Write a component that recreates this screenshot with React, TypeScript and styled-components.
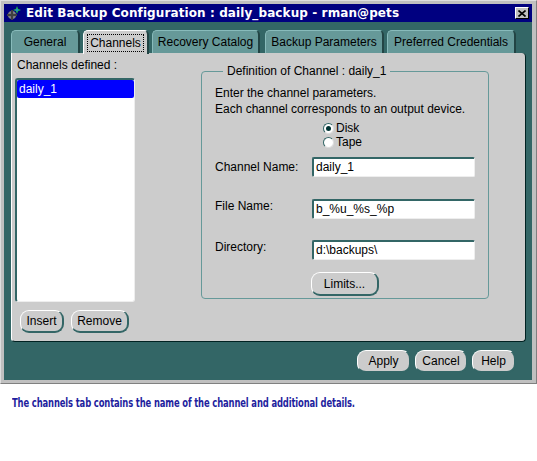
import React from 'react';
import styled, { createGlobalStyle } from 'styled-components';

const GlobalStyle = createGlobalStyle`
  body {
    margin: 0;
    background: #ffffff;
    font-family: 'Liberation Sans', Arial, sans-serif;
    font-size: 12px;
  }
`;

// outer window frame (classic grey chrome)
const Window = styled.div`
  width: 537px;
  box-sizing: border-box;
  background: #c0c0c0;
  border-top: 1px solid #dfdfdf;
  border-left: 1px solid #dfdfdf;
  border-right: 1px solid #808080;
  border-bottom: 1px solid #808080;
  padding: 3px 4px 3px 3px;
  display: flex;
  flex-direction: column;
`;

const TitleBar = styled.div`
  height: 18px;
  background: #000080;
  display: flex;
  align-items: center;
  padding: 0 2px 0 2px;
  gap: 4px;
`;

const TitleText = styled.div`
  flex: 1;
  color: #ffffff;
  font-family: 'DejaVu Sans', Verdana, sans-serif;
  font-weight: bold;
  font-size: 12px;
  letter-spacing: 0.1px;
  white-space: nowrap;
`;

const CloseButton = styled.div`
  width: 14px;
  height: 12px;
  box-sizing: border-box;
  background: #c0c0c0;
  border-top: 1px solid #ffffff;
  border-left: 1px solid #ffffff;
  border-right: 1px solid #000000;
  border-bottom: 1px solid #000000;
  display: flex;
  align-items: center;
  justify-content: center;
  margin-right: 1px;
`;

const Body = styled.div`
  background: #336666;
  padding: 8px 6px 7px 7px;
  display: flex;
  flex-direction: column;
`;

const TabRow = styled.div`
  display: flex;
  height: 23px;
  align-items: flex-end;
`;

const Tab = styled.div<{ $w: number; $gap: number; $active?: boolean }>`
  width: ${(p) => p.$w}px;
  margin-right: ${(p) => p.$gap}px;
  height: ${(p) => (p.$active ? 24 : 23)}px;
  box-sizing: border-box;
  background: ${(p) => (p.$active ? '#cccccc' : '#669999')};
  border-top: 1px solid ${(p) => (p.$active ? '#ffffff' : '#88bbbb')};
  border-left: 1px solid ${(p) => (p.$active ? '#ffffff' : '#88bbbb')};
  border-right: 2px solid #224444;
  border-radius: 5px 5px 0 0;
  display: flex;
  align-items: center;
  justify-content: center;
  color: #000000;
  font-size: 12px;
  position: relative;
  z-index: ${(p) => (p.$active ? 2 : 0)};
  margin-bottom: ${(p) => (p.$active ? -1 : 0)}px;
`;

const FocusLabel = styled.span`
  border: 1px dotted #000000;
  padding: 1px 2px;
`;

const Panel = styled.div`
  height: 289px;
  box-sizing: border-box;
  background: #cccccc;
  border-left: 1px solid #ffffff;
  border-right: 1px solid #002222;
  border-bottom: 1px solid #002222;
  border-radius: 0 4px 4px 4px;
  padding: 5px 4px 8px 3px;
  display: flex;
  position: relative;
  z-index: 1;
`;

const LeftColumn = styled.div`
  width: 120px;
  display: flex;
  flex-direction: column;
`;

const FieldLabel = styled.div`
  height: 14px;
  line-height: 14px;
  padding-left: 2px;
  color: #000000;
  margin-bottom: 6px;
`;

const ListBox = styled.div`
  height: 225px;
  box-sizing: border-box;
  background: #ffffff;
  border-top: 2px solid #336666;
  border-left: 2px solid #336666;
  border-right: 1px solid #eeeeee;
  border-bottom: 1px solid #eeeeee;
  border-radius: 3px;
`;

const ListItem = styled.div<{ $selected?: boolean }>`
  height: 18px;
  line-height: 18px;
  padding-left: 2px;
  background: ${(p) => (p.$selected ? '#0000ff' : 'transparent')};
  color: ${(p) => (p.$selected ? '#ffffff' : '#000000')};
  border-radius: 2px;
`;

const ButtonRow = styled.div<{ $gap: number }>`
  display: flex;
  gap: ${(p) => p.$gap}px;
  margin-top: 8px;
  padding-left: 5px;
`;

const PillButton = styled.div<{ $w: number; $h?: number }>`
  width: ${(p) => p.$w}px;
  height: ${(p) => p.$h ?? 23}px;
  box-sizing: border-box;
  background: #cccccc;
  border-top: 1px solid #ffffff;
  border-left: 1px solid #ffffff;
  border-right: 2px solid #336666;
  border-bottom: 2px solid #336666;
  border-radius: 9px;
  display: flex;
  align-items: center;
  justify-content: center;
  color: #000000;
  font-size: 12px;
`;

const GroupBox = styled.fieldset`
  margin: 6px 0 0 66px;
  width: 288px;
  height: 235px;
  box-sizing: border-box;
  border: 1px solid #669999;
  border-radius: 4px;
  padding: 7px 0 0 13px;
  display: flex;
  flex-direction: column;
`;

const Legend = styled.legend`
  margin-left: 8px;
  padding: 0 4px 0 4px;
  font-size: 12px;
  color: #000000;
`;

const Para = styled.div`
  line-height: 16px;
  color: #000000;
`;

const RadioGroup = styled.div`
  display: flex;
  flex-direction: column;
  padding-left: 108px;
  margin-top: 4px;
`;

const RadioRow = styled.div`
  display: flex;
  align-items: center;
  height: 14px;
  gap: 2px;
`;

const RadioDot = styled.span<{ $checked?: boolean }>`
  width: 11px;
  height: 11px;
  box-sizing: border-box;
  border-radius: 50%;
  background: #ffffff;
  border-top: 1px solid #336666;
  border-left: 1px solid #336666;
  border-right: 1px solid #dddddd;
  border-bottom: 1px solid #dddddd;
  display: flex;
  align-items: center;
  justify-content: center;
  &::after {
    content: '';
    width: 5px;
    height: 5px;
    border-radius: 50%;
    background: ${(p) => (p.$checked ? '#003333' : 'transparent')};
  }
`;

const FormRow = styled.div<{ $top: number }>`
  display: flex;
  align-items: flex-start;
  margin-top: ${(p) => p.$top}px;
`;

const RowLabel = styled.div<{ $lift: number }>`
  width: 97px;
  line-height: 14px;
  padding-top: ${(p) => 3 - p.$lift}px;
  color: #000000;
`;

const TextInput = styled.div`
  width: 163px;
  height: 20px;
  box-sizing: border-box;
  background: #ffffff;
  border-top: 2px solid #336666;
  border-left: 2px solid #336666;
  border-right: 1px solid #eeeeee;
  border-bottom: 1px solid #eeeeee;
  border-radius: 2px;
  padding-left: 2px;
  line-height: 17px;
  color: #000000;
`;

const LimitsWrap = styled.div`
  margin-top: 12px;
  padding-left: 96px;
`;

const Footer = styled.div`
  display: flex;
  justify-content: flex-end;
  gap: 4px;
  margin-top: 8px;
  padding-right: 10px;
`;

const Caption = styled.div`
  margin: 11px 0 0 12px;
  display: inline-block;
  white-space: nowrap;
  color: #1f1f9e;
  font-family: 'DejaVu Sans Condensed', 'Liberation Sans', sans-serif;
  font-weight: bold;
  font-size: 13px;
  letter-spacing: -0.2px;
  transform: scaleX(0.72);
  transform-origin: left center;
`;

const AppIcon = () => (
  <svg width="16" height="16" viewBox="0 0 16 16">
    <circle cx="6" cy="10" r="4" fill="#808080" />
    <circle cx="6" cy="10" r="1.8" fill="#000080" />
    <rect x="1" y="9" width="10" height="2" fill="#404040" />
    <rect x="5" y="5" width="2" height="10" fill="#404040" />
    <path d="M11 1 L12 4 L15 5 L12 6 L11 9 L10 6 L7 5 L10 4 Z" fill="#22cc44" />
    <circle cx="11" cy="5" r="1" fill="#2266ff" />
  </svg>
);

const CloseGlyph = () => (
  <svg width="8" height="7" viewBox="0 0 8 7">
    <path d="M0.5 0.5 L7.5 6.5 M7.5 0.5 L0.5 6.5" stroke="#000" strokeWidth="1.6" />
  </svg>
);

const tabs = [
  { label: 'General', w: 69, gap: 3 },
  { label: 'Channels', w: 66, gap: 3, active: true },
  { label: 'Recovery Catalog', w: 108, gap: 5 },
  { label: 'Backup Parameters', w: 119, gap: 3 },
  { label: 'Preferred Credentials', w: 129, gap: 0 },
];

const App: React.FC = () => {
  return (
    <>
      <GlobalStyle />
      <Window>
        <TitleBar>
          <AppIcon />
          <TitleText>Edit Backup Configuration : daily_backup - rman@pets</TitleText>
          <CloseButton>
            <CloseGlyph />
          </CloseButton>
        </TitleBar>
        <Body>
          <TabRow>
            {tabs.map((t) => (
              <Tab key={t.label} $w={t.w} $gap={t.gap} $active={t.active}>
                {t.active ? <FocusLabel>{t.label}</FocusLabel> : t.label}
              </Tab>
            ))}
          </TabRow>
          <Panel>
            <LeftColumn>
              <FieldLabel>Channels defined :</FieldLabel>
              <ListBox>
                <ListItem $selected>daily_1</ListItem>
              </ListBox>
              <ButtonRow $gap={7}>
                <PillButton $w={44}>Insert</PillButton>
                <PillButton $w={58}>Remove</PillButton>
              </ButtonRow>
            </LeftColumn>
            <GroupBox>
              <Legend>Definition of Channel : daily_1</Legend>
              <Para>Enter the channel parameters.</Para>
              <Para>Each channel corresponds to an output device.</Para>
              <RadioGroup>
                <RadioRow>
                  <RadioDot $checked />
                  Disk
                </RadioRow>
                <RadioRow>
                  <RadioDot />
                  Tape
                </RadioRow>
              </RadioGroup>
              <FormRow $top={8}>
                <RowLabel $lift={0}>Channel Name:</RowLabel>
                <TextInput>daily_1</TextInput>
              </FormRow>
              <FormRow $top={22}>
                <RowLabel $lift={3}>File Name:</RowLabel>
                <TextInput>b_%u_%s_%p</TextInput>
              </FormRow>
              <FormRow $top={21}>
                <RowLabel $lift={4}>Directory:</RowLabel>
                <TextInput>d:\backups\</TextInput>
              </FormRow>
              <LimitsWrap>
                <PillButton $w={68} $h={24}>
                  Limits...
                </PillButton>
              </LimitsWrap>
            </GroupBox>
          </Panel>
          <Footer>
            <PillButton $w={54}>Apply</PillButton>
            <PillButton $w={53}>Cancel</PillButton>
            <PillButton $w={44}>Help</PillButton>
          </Footer>
        </Body>
      </Window>
      <Caption>The channels tab contains the name of the channel and additional details.</Caption>
    </>
  );
};

export default App;
